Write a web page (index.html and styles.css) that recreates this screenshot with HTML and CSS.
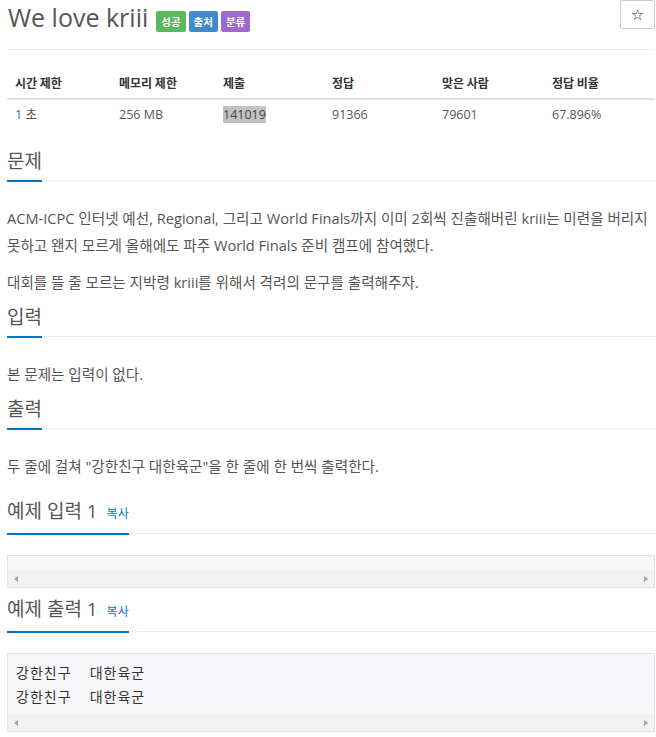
FILE: index.html
```html
<!DOCTYPE html>
<html>
<head>
  <meta charset="utf-8">
  <title>We love kriii</title>
  <link rel="stylesheet" href="styles.css">
</head>
<body>
  <div class="container">

    <div class="page-header">
      <h1 class="title-row">
        <span class="problem-title">We love kriii</span>
        <span class="labels">
          <span class="label label-success">성공</span>
          <span class="label label-info">출처</span>
          <span class="label label-purple">분류</span>
        </span>
      </h1>
      <button class="star-button">☆</button>
    </div>

    <table class="problem-info">
      <thead>
        <tr>
          <th>시간 제한</th>
          <th>메모리 제한</th>
          <th>제출</th>
          <th>정답</th>
          <th>맞은 사람</th>
          <th>정답 비율</th>
        </tr>
      </thead>
      <tbody>
        <tr>
          <td><a class="link">1</a> 초</td>
          <td>256 MB</td>
          <td><span class="selected">141019</span></td>
          <td>91366</td>
          <td>79601</td>
          <td>67.896%</td>
        </tr>
      </tbody>
    </table>

    <section class="problem-section">
      <div class="headline"><h2>문제</h2></div>
      <div class="problem-text">
        <p>ACM-ICPC 인터넷 예선, Regional, 그리고 World Finals까지 이미 2회씩 진출해버린 kriii는 미련을 버리지 못하고 왠지 모르게 올해에도 파주 World Finals 준비 캠프에 참여했다.</p>
        <p>대회를 뜰 줄 모르는 지박령 kriii를 위해서 격려의 문구를 출력해주자.</p>
      </div>
    </section>

    <section class="problem-section">
      <div class="headline"><h2>입력</h2></div>
      <div class="problem-text">
        <p>본 문제는 입력이 없다.</p>
      </div>
    </section>

    <section class="problem-section">
      <div class="headline"><h2>출력</h2></div>
      <div class="problem-text">
        <p>두 줄에 걸쳐 "강한친구 대한육군"을 한 줄에 한 번씩 출력한다.</p>
      </div>
    </section>

    <div class="samples">
      <section class="sample-section">
        <div class="headline"><h2>예제 입력 1 <a class="copy-button">복사</a></h2></div>
        <div class="sample-box">
          <pre class="sampledata"></pre>
          <div class="scrollbar"><span class="arrow-left"></span><span class="arrow-right"></span></div>
        </div>
      </section>

      <section class="sample-section">
        <div class="headline"><h2>예제 출력 1 <a class="copy-button">복사</a></h2></div>
        <div class="sample-box">
          <pre class="sampledata">강한친구 대한육군
강한친구 대한육군</pre>
          <div class="scrollbar"><span class="arrow-left"></span><span class="arrow-right"></span></div>
        </div>
      </section>
    </div>

  </div>
</body>
</html>
```

FILE: styles.css
```css
*{
    margin: 0;
    padding: 0;
    box-sizing: border-box;
}
body{
    font-family: 'Open Sans', 'Noto Sans CJK KR', sans-serif;
    font-size: 14px;
    color: #555;
    background: #fff;
}
.container{
    padding: 0 1px 0 7px;
}

/* title */
.page-header{
    display: flex;
    justify-content: space-between;
    align-items: flex-start;
    padding-bottom: 17px;
    border-bottom: 1px solid #eee;
}
.title-row{
    display: flex;
    align-items: flex-start;
    height: 32px;
    font-size: 25px;
    font-weight: 400;
    line-height: 34px;
    color: #555;
}
.problem-title{
    padding-left: 1px;
}
.labels{
    display: flex;
    gap: 3px;
    margin: 11px 0 0 8px;
}
.label{
    display: block;
    height: 21px;
    line-height: 21px;
    padding: 0 5px;
    font-family: 'Noto Sans CJK KR', sans-serif;
    font-size: 10.5px;
    font-weight: bold;
    color: #fff;
    border-radius: 2px;
}
.label-success{ background: #5cb85c; }
.label-info{ background: #428bca; }
.label-purple{ background: #9f68c9; }

.star-button{
    width: 35px;
    height: 29px;
    background: #fff;
    border: 1px solid #ccc;
    border-radius: 2px;
    font-family: 'DejaVu Sans', sans-serif;
    font-size: 15px;
    line-height: 26px;
    color: #222;
}

/* info table */
.problem-info{
    width: 100%;
    margin: 14px 0 20px;
    border-collapse: collapse;
    table-layout: fixed;
}
.problem-info th{
    padding: 10px 8px 6px;
    line-height: 18px;
    font-family: 'Noto Sans CJK KR', sans-serif;
    font-size: 12px;
    font-weight: bold;
    color: #333;
    text-align: left;
    border-bottom: 2px solid #e2e2e2;
}
.problem-info th:nth-child(1),
.problem-info th:nth-child(2){ width: 104px; }
.problem-info th:nth-child(3){ width: 109px; }
.problem-info th:nth-child(4),
.problem-info th:nth-child(5){ width: 110px; }
.problem-info td{
    padding: 6px 8px;
    line-height: 18px;
    font-size: 12.5px;
    color: #555;
}
.link{
    color: #0076c0;
}
.selected{
    background: #c2c2c2;
    color: #444;
}

/* sections */
.headline{
    display: flex;
    margin: 10px 0 24px;
    border-bottom: 1px dotted #d8dee8;
}
.headline h2{
    margin: 0 0 -2px;
    padding-bottom: 8px;
    font-size: 19px;
    font-weight: 400;
    line-height: 22px;
    color: #555;
    border-bottom: 2px solid #0076c0;
}
.problem-text p{
    margin: 0 0 10px;
    font-size: 14.6px;
    line-height: 27px;
}

.samples{
    margin-top: 20px;
}
.sample-section .headline{
    margin-bottom: 21px;
}
.copy-button{
    margin-left: 4px;
    font-size: 12px;
    color: #0076c0;
}
.sample-box{
    margin-bottom: 10px;
    background: #f7f7f9;
    border: 1px solid #e1e1e8;
}
.sampledata{
    min-height: 14px;
    padding: 6px 8px 6px;
    font-family: 'Noto Sans CJK KR', monospace;
    font-size: 14px;
    line-height: 24px;
    letter-spacing: 1px;
    word-spacing: 14px;
    color: #333;
}
.scrollbar{
    display: flex;
    justify-content: space-between;
    align-items: center;
    height: 17px;
    padding: 0 6px;
    background: #f1f1f1;
}
.arrow-left{
    border-top: 3.5px solid transparent;
    border-bottom: 3.5px solid transparent;
    border-right: 4px solid #a3a3a3;
}
.arrow-right{
    border-top: 3.5px solid transparent;
    border-bottom: 3.5px solid transparent;
    border-left: 4px solid #a3a3a3;
}
```
